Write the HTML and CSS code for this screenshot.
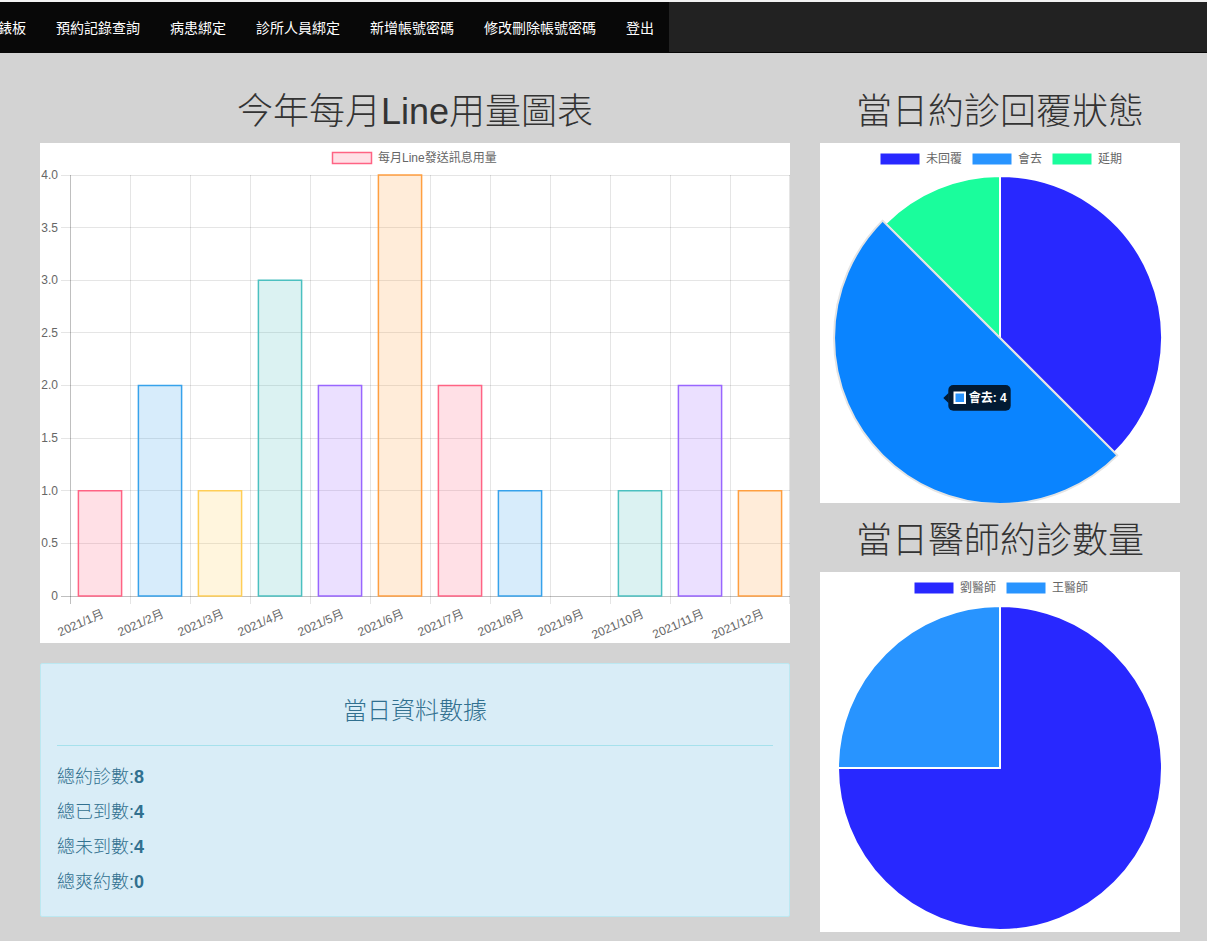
FILE: index.html
```html
<!DOCTYPE html>
<html lang="zh-Hant">
<head>
<meta charset="utf-8">
<title>儀錶板</title>
<link rel="stylesheet" href="styles.css">
</head>
<body>
<nav class="navbar">
  <ul class="nav-list">
    <li><a href="#">儀錶板</a></li>
    <li><a href="#">預約記錄查詢</a></li>
    <li><a href="#">病患綁定</a></li>
    <li><a href="#">診所人員綁定</a></li>
    <li><a href="#">新增帳號密碼</a></li>
    <li><a href="#">修改刪除帳號密碼</a></li>
    <li><a href="#">登出</a></li>
  </ul>
</nav>
<main class="main">
  <section class="col-left">
    <h1 class="chart-title">今年每月Line用量圖表</h1>
    <div class="chart-box bar-box">
      <svg width="750" height="500" viewBox="0 0 750 500">
        <!-- legend -->
        <rect x="292.5" y="9.5" width="39" height="11" fill="rgba(255,99,132,0.2)" stroke="rgb(255,99,132)" stroke-width="1.5"/>
        <text class="lbl" x="338" y="15" dominant-baseline="central">每月Line發送訊息用量</text>
        <!-- horizontal grid -->
        <g class="grid">
          <line x1="21" y1="32.5" x2="750" y2="32.5"/>
          <line x1="21" y1="84.5" x2="750" y2="84.5"/>
          <line x1="21" y1="137.5" x2="750" y2="137.5"/>
          <line x1="21" y1="189.5" x2="750" y2="189.5"/>
          <line x1="21" y1="242.5" x2="750" y2="242.5"/>
          <line x1="21" y1="295.5" x2="750" y2="295.5"/>
          <line x1="21" y1="347.5" x2="750" y2="347.5"/>
          <line x1="21" y1="400.5" x2="750" y2="400.5"/>
        </g>
        <!-- vertical grid -->
        <g class="grid">
          <line x1="90.5" y1="32" x2="90.5" y2="461"/>
          <line x1="150.5" y1="32" x2="150.5" y2="461"/>
          <line x1="210.5" y1="32" x2="210.5" y2="461"/>
          <line x1="270.5" y1="32" x2="270.5" y2="461"/>
          <line x1="330.5" y1="32" x2="330.5" y2="461"/>
          <line x1="390.5" y1="32" x2="390.5" y2="461"/>
          <line x1="450.5" y1="32" x2="450.5" y2="461"/>
          <line x1="510.5" y1="32" x2="510.5" y2="461"/>
          <line x1="570.5" y1="32" x2="570.5" y2="461"/>
          <line x1="630.5" y1="32" x2="630.5" y2="461"/>
          <line x1="690.5" y1="32" x2="690.5" y2="461"/>
          <line x1="749.5" y1="32" x2="749.5" y2="461"/>
        </g>
        <g class="axis">
          <line x1="30.5" y1="32" x2="30.5" y2="461"/>
          <line x1="21" y1="453.5" x2="750" y2="453.5"/>
        </g>
        <!-- y labels -->
        <g class="lbl" text-anchor="end">
          <text x="18" y="32" dominant-baseline="central">4.0</text>
          <text x="18" y="85" dominant-baseline="central">3.5</text>
          <text x="18" y="137" dominant-baseline="central">3.0</text>
          <text x="18" y="190" dominant-baseline="central">2.5</text>
          <text x="18" y="242" dominant-baseline="central">2.0</text>
          <text x="18" y="295" dominant-baseline="central">1.5</text>
          <text x="18" y="348" dominant-baseline="central">1.0</text>
          <text x="18" y="400" dominant-baseline="central">0.5</text>
          <text x="18" y="453" dominant-baseline="central">0</text>
        </g>
        <!-- bars -->
        <g stroke-width="1.5">
          <rect x="38.4" y="347.75" width="43.2" height="105.25" fill="rgba(255,99,132,0.2)" stroke="rgb(255,99,132)"/>
          <rect x="98.4" y="242.5" width="43.2" height="210.5" fill="rgba(54,162,235,0.2)" stroke="rgb(54,162,235)"/>
          <rect x="158.4" y="347.75" width="43.2" height="105.25" fill="rgba(255,206,86,0.2)" stroke="rgb(255,206,86)"/>
          <rect x="218.4" y="137.25" width="43.2" height="315.75" fill="rgba(75,192,192,0.2)" stroke="rgb(75,192,192)"/>
          <rect x="278.4" y="242.5" width="43.2" height="210.5" fill="rgba(153,102,255,0.2)" stroke="rgb(153,102,255)"/>
          <rect x="338.4" y="32" width="43.2" height="421" fill="rgba(255,159,64,0.2)" stroke="rgb(255,159,64)"/>
          <rect x="398.4" y="242.5" width="43.2" height="210.5" fill="rgba(255,99,132,0.2)" stroke="rgb(255,99,132)"/>
          <rect x="458.4" y="347.75" width="43.2" height="105.25" fill="rgba(54,162,235,0.2)" stroke="rgb(54,162,235)"/>
          <rect x="578.4" y="347.75" width="43.2" height="105.25" fill="rgba(75,192,192,0.2)" stroke="rgb(75,192,192)"/>
          <rect x="638.4" y="242.5" width="43.2" height="210.5" fill="rgba(153,102,255,0.2)" stroke="rgb(153,102,255)"/>
          <rect x="698.4" y="347.75" width="43.2" height="105.25" fill="rgba(255,159,64,0.2)" stroke="rgb(255,159,64)"/>
        </g>
        <!-- x labels -->
        <g class="lbl" text-anchor="end">
          <text transform="translate(63 470) rotate(-24)" dominant-baseline="central">2021/1月</text>
          <text transform="translate(123 470) rotate(-24)" dominant-baseline="central">2021/2月</text>
          <text transform="translate(183 470) rotate(-24)" dominant-baseline="central">2021/3月</text>
          <text transform="translate(243 470) rotate(-24)" dominant-baseline="central">2021/4月</text>
          <text transform="translate(303 470) rotate(-24)" dominant-baseline="central">2021/5月</text>
          <text transform="translate(363 470) rotate(-24)" dominant-baseline="central">2021/6月</text>
          <text transform="translate(423 470) rotate(-24)" dominant-baseline="central">2021/7月</text>
          <text transform="translate(483 470) rotate(-24)" dominant-baseline="central">2021/8月</text>
          <text transform="translate(543 470) rotate(-24)" dominant-baseline="central">2021/9月</text>
          <text transform="translate(603 470) rotate(-24)" dominant-baseline="central">2021/10月</text>
          <text transform="translate(663 470) rotate(-24)" dominant-baseline="central">2021/11月</text>
          <text transform="translate(723 470) rotate(-24)" dominant-baseline="central">2021/12月</text>
        </g>
      </svg>
    </div>
    <div class="info-panel">
      <h3 class="info-title">當日資料數據</h3>
      <hr class="info-rule">
      <p class="info-item">總約診數:<strong>8</strong></p>
      <p class="info-item">總已到數:<strong>4</strong></p>
      <p class="info-item">總未到數:<strong>4</strong></p>
      <p class="info-item">總爽約數:<strong>0</strong></p>
    </div>
  </section>
  <section class="col-right">
    <h1 class="chart-title">當日約診回覆狀態</h1>
    <div class="chart-box pie-box">
      <svg width="360" height="360" viewBox="0 0 360 360">
        <rect x="60" y="10" width="40" height="12" fill="#2828ff" stroke="#fff"/>
        <text class="lbl" x="106" y="16" dominant-baseline="central">未回覆</text>
        <rect x="152" y="10" width="40" height="12" fill="#2894ff" stroke="#fff"/>
        <text class="lbl" x="198" y="16" dominant-baseline="central">會去</text>
        <rect x="232" y="10" width="40" height="12" fill="#1afd9c" stroke="#fff"/>
        <text class="lbl" x="278" y="16" dominant-baseline="central">延期</text>
        <path d="M180 195 L180 33 A162 162 0 0 1 294.55 309.55 Z" fill="#2828ff" stroke="#fff" stroke-width="2" stroke-linejoin="round"/>
        <path d="M180 195 L65.45 80.45 A162 162 0 0 1 180 33 Z" fill="#1afd9c" stroke="#fff" stroke-width="2" stroke-linejoin="round"/>
        <path d="M180 195 L297.38 312.38 A166 166 0 0 1 62.62 77.62 Z" fill="#0a84ff" stroke="#e4e4e4" stroke-width="2" stroke-linejoin="round"/>
        <g class="tooltip">
          <polygon points="128.5,250 123.3,255 128.5,260" fill="rgba(0,0,0,0.8)"/>
          <rect x="128.3" y="242" width="62.4" height="25.7" rx="5" fill="rgba(0,0,0,0.8)"/>
          <rect x="133.5" y="248.5" width="12.5" height="12.5" fill="#fff"/>
          <rect x="135.5" y="250.5" width="8.5" height="8.5" fill="#2894ff"/>
          <text class="tip" x="148.7" y="255" dominant-baseline="central">會去: 4</text>
        </g>
      </svg>
    </div>
    <h1 class="chart-title second">當日醫師約診數量</h1>
    <div class="chart-box pie-box">
      <svg width="360" height="360" viewBox="0 0 360 360">
        <rect x="94" y="10" width="40" height="12" fill="#2828ff" stroke="#fff"/>
        <text class="lbl" x="140" y="16" dominant-baseline="central">劉醫師</text>
        <rect x="186" y="10" width="40" height="12" fill="#2894ff" stroke="#fff"/>
        <text class="lbl" x="232" y="16" dominant-baseline="central">王醫師</text>
        <path d="M180 196 L180 34 A162 162 0 1 1 18 196 Z" fill="#2828ff" stroke="#fff" stroke-width="2" stroke-linejoin="round"/>
        <path d="M180 196 L18 196 A162 162 0 0 1 180 34 Z" fill="#2894ff" stroke="#fff" stroke-width="2" stroke-linejoin="round"/>
      </svg>
    </div>
  </section>
</main>
</body>
</html>
```

FILE: styles.css
```css
* {
  box-sizing: border-box;
}

html,
body {
  margin: 0;
  padding: 0;
}

body {
  background: #d3d3d3;
  font-family: "Liberation Sans", "Noto Sans CJK TC", sans-serif;
  color: #333;
  overflow: hidden;
}

.navbar {
  display: flex;
  height: 53px;
  background: #222;
  border-top: 2px solid #f2f2f2;
  border-bottom: 1px solid #080808;
  overflow: hidden;
}

.nav-list {
  display: flex;
  list-style: none;
  margin: 0 0 0 -31px;
  padding: 0;
  height: 50px;
  background: #080808;
}

.nav-list a {
  display: block;
  padding: 0 15px;
  line-height: 50px;
  font-size: 14px;
  color: #fff;
  text-decoration: none;
  font-family: "Noto Sans CJK TC", sans-serif;
}

.main {
  display: flex;
  align-items: flex-start;
  gap: 30px;
  padding-left: 40px;
}

.col-left {
  width: 750px;
}

.col-right {
  width: 360px;
}

.chart-title {
  margin: 39px 0 11px;
  font-size: 36px;
  line-height: 40px;
  font-weight: 300;
  text-align: center;
  color: #333;
  white-space: nowrap;
}

.chart-title.second {
  margin-top: 18px;
}

.chart-box {
  background: #fff;
}

.chart-box svg {
  display: block;
}

.bar-box {
  height: 500px;
}

.pie-box {
  height: 360px;
}

.grid line {
  stroke: rgba(0, 0, 0, 0.1);
  stroke-width: 1;
}

.axis line {
  stroke: rgba(0, 0, 0, 0.25);
  stroke-width: 1;
}

.lbl {
  font-family: "Liberation Sans", "Noto Sans CJK TC", sans-serif;
  font-size: 12px;
  fill: #666;
}

.tip {
  font-family: "Liberation Sans", "Noto Sans CJK TC", sans-serif;
  font-size: 12px;
  font-weight: 700;
  fill: #fff;
}

.info-panel {
  margin-top: 20px;
  padding: 16px 16px 21px;
  background: #d9edf7;
  border: 1px solid #bce8f1;
  border-radius: 2px;
  color: #31708f;
}

.info-title {
  margin: 18px 0 0;
  font-size: 24px;
  line-height: 26px;
  font-weight: 300;
  text-align: center;
}

.info-rule {
  height: 0;
  margin: 21px 0 19px;
  border: 0;
  border-top: 1px solid #a6e1ec;
}

.info-item {
  margin: 0 0 10px;
  font-size: 18px;
  line-height: 25px;
  font-weight: 300;
}

.info-item strong {
  font-weight: 700;
}

.info-item:last-child {
  margin-bottom: 0;
}
```
